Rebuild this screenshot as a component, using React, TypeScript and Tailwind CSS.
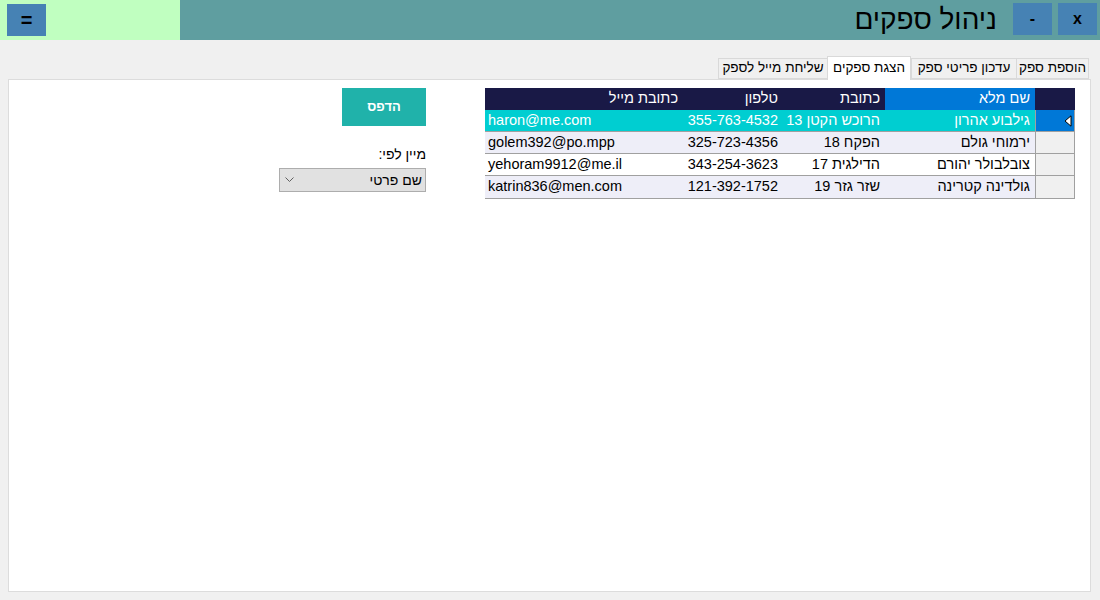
import React from "react";

const rows = [
  { name: "גילבוע אהרון", addr: "הרוכש הקטן 13", phone: "355-763-4532", mail: "haron@me.com" },
  { name: "ירמוחי גולם", addr: "הפקח 18", phone: "325-723-4356", mail: "golem392@po.mpp" },
  { name: "צובלבולר יהורם", addr: "הדילגית 17", phone: "343-254-3623", mail: "yehoram9912@me.il" },
  { name: "גולדינה קטרינה", addr: "שזר גזר 19", phone: "121-392-1752", mail: "katrin836@men.com" },
];

export default function App() {
  return (
    <div
      className="w-[1100px] h-[600px] bg-[#F0F0F0] flex flex-col overflow-hidden"
      style={{ fontFamily: '"Liberation Sans", Arial, "DejaVu Sans", sans-serif' }}
    >
      {/* Title bar */}
      <div className="h-[40px] flex shrink-0">
        <div className="w-[180px] bg-[#C0FFC0] pl-[7px] pt-[4px]">
          <div className="w-[39px] h-[32px] bg-[#4682B4] flex items-center justify-center text-[20px] font-bold text-black">
            =
          </div>
        </div>
        <div className="flex-1 bg-[#5F9EA0] flex items-start justify-end pr-[3px]">
          <div className="text-[28px] leading-[40px] text-black mr-[16px]" dir="rtl">
            ניהול ספקים
          </div>
          <div className="mt-[3px] w-[39px] h-[32px] bg-[#4682B4] flex items-center justify-center text-[16px] font-bold text-black mr-[6px]">
            -
          </div>
          <div className="mt-[3px] w-[39px] h-[32px] bg-[#4682B4] flex items-center justify-center text-[16px] font-bold text-black">
            x
          </div>
        </div>
      </div>

      {/* Tabs */}
      <div className="mt-[15px] flex justify-end pr-[11px] h-[24px] items-end relative z-10" dir="ltr">
        <div className="flex items-end" dir="rtl">
          <div className="h-[21px] w-[73px] border border-[#D9D9D9] bg-[#F0F0F0] text-[13.5px] flex items-center justify-center text-black whitespace-nowrap">
            הוספת ספק
          </div>
          <div className="h-[21px] w-[105px] border border-r-0 border-[#D9D9D9] bg-[#F0F0F0] text-[13.5px] flex items-center justify-center text-black whitespace-nowrap">
            עדכון פריטי ספק
          </div>
          <div className="h-[24px] w-[84px] border border-b-0 border-[#D9D9D9] bg-white text-[13.5px] flex items-center justify-center text-black -mb-px whitespace-nowrap">
            הצגת ספקים
          </div>
          <div className="h-[21px] w-[109px] border border-r-0 border-[#D9D9D9] bg-[#F0F0F0] text-[13.5px] flex items-center justify-center text-black whitespace-nowrap">
            שליחת מייל לספק
          </div>
        </div>
      </div>

      {/* Panel */}
      <div className="ml-[8px] w-[1083px] h-[513px] bg-white border border-[#DCDCDC] flex pt-[8px] pr-[15px]" dir="rtl">
        {/* Grid */}
        <div className="w-[590px] text-[14.5px] text-black self-start border-b border-[#A0A0A0]">
          <div className="flex h-[22px] bg-[#191946] text-white">
            <div className="w-[40px]" />
            <div className="w-[150px] bg-[#0078D7] pr-[5px] flex items-center">שם מלא</div>
            <div className="w-[100px] pr-[5px] flex items-center">כתובת</div>
            <div className="w-[100px] pr-[7px] flex items-center">טלפון</div>
            <div className="w-[200px] pr-[7px] flex items-center">כתובת מייל</div>
          </div>
          {rows.map((r, i) => {
            const sel = i === 0;
            const bg = sel ? "bg-[#00CED1] text-white" : i % 2 === 1 ? "bg-[#EEEEF8]" : "bg-white";
            return (
              <div key={i} className="flex h-[22px]">
                <div
                  className={
                    "w-[40px] border-l border-r border-[#A0A0A0] flex items-center justify-start pr-[2px] " +
                    (sel ? "bg-[#0078D7]" : "bg-[#F0F0F0]") +
                    (i < 3 ? " border-b" : "")
                  }
                >
                  {sel && (
                    <svg width="8" height="12" viewBox="0 0 8 12">
                      <path d="M7 0.8 L1 6 L7 11.2 Z" fill="white" stroke="black" strokeWidth="1" />
                    </svg>
                  )}
                </div>
                <div className={"flex flex-1 " + bg + (i < 3 ? " border-b border-[#A0A0A0]" : "")}>
                  <div className="w-[150px] pr-[5px] flex items-center whitespace-nowrap">{r.name}</div>
                  <div className="w-[100px] pr-[5px] flex items-center whitespace-nowrap overflow-hidden">{r.addr}</div>
                  <div className="w-[100px] pr-[7px] flex items-center whitespace-nowrap" dir="ltr">
                    <span className="ml-auto">{r.phone}</span>
                  </div>
                  <div className="w-[200px] pl-[3px] flex items-center whitespace-nowrap" dir="ltr">
                    {r.mail}
                  </div>
                </div>
              </div>
            );
          })}
        </div>

        {/* Controls */}
        <div className="w-[147px] mr-[59px] flex flex-col items-start">
          <div className="w-[84px] h-[38px] bg-[#20B2AA] text-white font-bold text-[13px] flex items-center justify-center">
            הדפס
          </div>
          <div className="mt-[20px] text-[14px] text-black leading-[16px]">מיין לפי:</div>
          <div className="mt-[6px] w-[147px] h-[24px] bg-[#E1E1E1] border border-[#ADADAD] flex items-center justify-between pr-[3px] pl-[5px] text-[14px] text-black">
            <span>שם פרטי</span>
            <svg width="9" height="6" viewBox="0 0 9 6">
              <path d="M0.5 0.5 L4.5 4.5 L8.5 0.5" fill="none" stroke="#606060" strokeWidth="1" />
            </svg>
          </div>
        </div>
      </div>
    </div>
  );
}
